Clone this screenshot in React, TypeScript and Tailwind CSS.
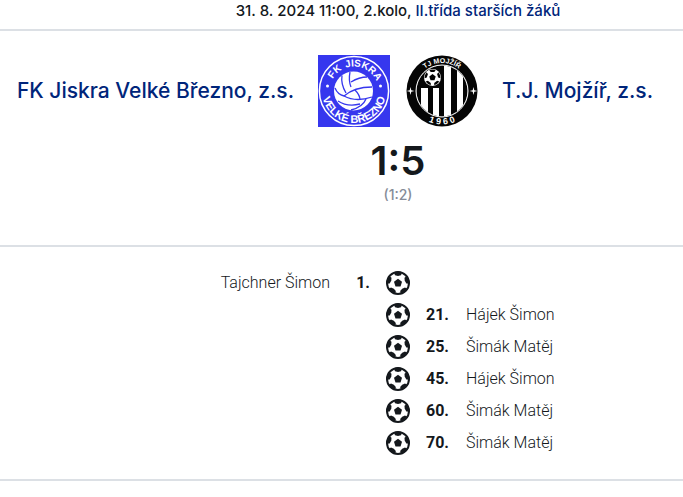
interface Goal {
  minute: number;
  player: string;
  side: "home" | "away";
}

const goals: Goal[] = [
  { minute: 1, player: "Tajchner Šimon", side: "home" },
  { minute: 21, player: "Hájek Šimon", side: "away" },
  { minute: 25, player: "Šimák Matěj", side: "away" },
  { minute: 45, player: "Hájek Šimon", side: "away" },
  { minute: 60, player: "Šimák Matěj", side: "away" },
  { minute: 70, player: "Šimák Matěj", side: "away" },
];

const patchAngles = [0, 72, 144, 216, 288];

function BallIcon() {
  return (
    <svg viewBox="0 0 24 24" className="size-6 text-[#14181c]" fill="currentColor" aria-hidden="true">
      <circle cx="12" cy="12" r="11" fill="#fff" stroke="currentColor" strokeWidth="2" />
      <path d="M12 7.8 16 10.7 14.5 15.4H9.5L8 10.7Z" />
      {patchAngles.map((angle) => (
        <path
          key={angle}
          d="M7.8 1.2Q12 0 16.2 1.2L15 4.2 12 4.900 9 4.2Z"
          transform={`rotate(${angle} 12 12)`}
        />
      ))}
    </svg>
  );
}

function JiskraLogo() {
  return (
    <svg viewBox="0 0 72 72" className="size-[72px] shrink-0" role="img" aria-label="FK Jiskra Velké Březno">
      <defs>
        <path id="jiskra-top" d="M11.5 36A24.5 24.5 0 0 1 60.5 36" />
        <path id="jiskra-bottom" d="M4 36A32 32 0 0 0 68 36" />
      </defs>
      <rect width="72" height="72" fill="#3637ee" />
      <circle cx="36" cy="36" r="34.6" fill="none" stroke="#fff" strokeWidth="1.5" />
      <circle cx="35.5" cy="36" r="19.5" fill="#fff" />
      <g fill="none" stroke="#3637ee" strokeWidth="1.3">
        <path d="M32 17C31 22 31 27 33 32" />
        <path d="M24 20.5C23 27 25 33 28 38" />
        <path d="M17 33C19 38 22 40 26 41" />
        <path d="M26 41C34 34 44 32 54 32" />
        <path d="M33 27C38 24 43 22 49 22" />
        <path d="M26 41C35 46 45 45 54 42" />
        <path d="M20 46C26 50 34 51 42 49" />
        <path d="M33 55C41 53 46 49 48 44" />
        <path d="M37 35C40 38 42 41 42 45" />
      </g>
      <circle cx="9.5" cy="31" r="1.5" fill="#fff" />
      <circle cx="62.5" cy="31" r="1.5" fill="#fff" />
      <g
        fill="#fff"
        textAnchor="middle"
        className="font-['Liberation_Sans_Narrow','Liberation_Sans',sans-serif] font-bold"
      >
        <text className="text-[10px]">
          <textPath href="#jiskra-top" startOffset="25%">FK</textPath>
        </text>
        <text className="text-[10px]">
          <textPath href="#jiskra-top" startOffset="63%">JISKRA</textPath>
        </text>
        <text className="text-[11px]">
          <textPath href="#jiskra-bottom" startOffset="50%">VELKÉ BŘEZNO</textPath>
        </text>
      </g>
    </svg>
  );
}

function MojzirLogo() {
  return (
    <svg viewBox="0 0 72 72" className="size-[72px] shrink-0" role="img" aria-label="T.J. Mojžíř">
      <defs>
        <path id="mojzir-top" d="M8 36A28 28 0 0 1 64 36" />
        <path id="mojzir-bottom" d="M2.5 36A33.5 33.5 0 0 0 69.5 36" />
        <clipPath id="mojzir-shield">
          <circle cx="36" cy="36" r="25.5" />
        </clipPath>
      </defs>
      <circle cx="36" cy="36" r="35.5" fill="#050505" />
      <g clipPath="url(#mojzir-shield)">
        <rect x="10" y="10" width="52" height="52" fill="#fff" />
        <rect x="8" y="8" width="30" height="25" fill="#050505" />
        <rect x="9" y="33" width="6" height="31" fill="#050505" />
        <rect x="22" y="33" width="5" height="31" fill="#050505" />
        <rect x="33" y="8" width="5" height="56" fill="#050505" />
        <rect x="45" y="8" width="6" height="56" fill="#050505" />
        <rect x="57" y="8" width="7" height="56" fill="#050505" />
      </g>
      <circle cx="36" cy="36" r="26" fill="none" stroke="#fff" strokeWidth="1" />
      <g transform="translate(26.5 22.5)" fill="#050505">
        <circle r="8.5" fill="#fff" />
        <path d="M0-3.4 3.2-1 2 2.7H-2L-3.200-1Z" />
        {patchAngles.map((angle) => (
          <path key={angle} d="M-3.2-7.4Q0-8.4 3.200-7.4L1.8-5.4H-1.8Z" transform={`rotate(${angle})`} />
        ))}
      </g>
      <path d="M4.500 32 5.300 35.2 8.500 36 5.300 36.8 4.500 40 3.700 36.8 .5 36 3.700 35.2Z" fill="#fff" />
      <path d="M67.500 32 68.300 35.2 71.500 36 68.300 36.8 67.500 40 66.700 36.8 63.500 36 66.700 35.2Z" fill="#fff" />
      <g fill="#fff" textAnchor="middle" className="font-['Liberation_Sans',sans-serif] font-bold">
        <text className="text-[7px]">
          <textPath href="#mojzir-top" startOffset="50%">TJ MOJŽÍŘ</textPath>
        </text>
        <text className="text-[9px]">
          <textPath href="#mojzir-bottom" startOffset="50%">1 9 6 0</textPath>
        </text>
      </g>
    </svg>
  );
}

function GoalRow({ goal }: { goal: Goal }) {
  const home = goal.side === "home";

  return (
    <li className="grid h-8 grid-cols-[1fr_auto_1fr] items-center gap-4">
      <div className="flex justify-end">
        {home && (
          <>
            <span>{goal.player}</span>
            <span className="w-10 text-right font-bold">{goal.minute}.</span>
          </>
        )}
      </div>
      <BallIcon />
      <div className="flex">
        {!home && (
          <>
            <span className="w-10 font-bold">{goal.minute}.</span>
            <span>{goal.player}</span>
          </>
        )}
      </div>
    </li>
  );
}

export default function App() {
  return (
    <div className="overflow-x-hidden bg-white text-[#14181c]">
      <main className="min-w-[796px] font-[Inter,sans-serif]">
        <p className="border-b-2 border-[#dce0e5] pb-2 text-center text-[15px] leading-[21px] font-medium">
          31. 8. 2024 11:00, 2.kolo,{" "}
          <a href="#soutez" className="text-[#00257a]">
            II.třída starších žáků
          </a>
        </p>

        <section className="border-b-2 border-[#dce0e5] pt-6 pb-10 text-center">
          <div className="grid grid-cols-[1fr_auto_1fr] items-center gap-6 text-[21px] leading-7 font-medium text-[#00257a]">
            <a href="#domaci" className="text-right whitespace-nowrap">
              FK Jiskra Velké Březno, z.s.
            </a>
            <div className="flex gap-4">
              <JiskraLogo />
              <MojzirLogo />
            </div>
            <a href="#hoste" className="text-left whitespace-nowrap">
              T.J. Mojžíř, z.s.
            </a>
          </div>
          <h1 className="mt-3 text-[40px] leading-[44px] font-semibold">1:5</h1>
          <p className="mt-0.5 text-[14px] leading-5 font-medium text-[#868c98]">(1:2)</p>
        </section>

        <ul className="border-b-2 border-[#dce0e5] py-5 font-[Roboto,sans-serif] text-base leading-6 font-light">
          {goals.map((goal) => (
            <GoalRow key={goal.minute} goal={goal} />
          ))}
        </ul>
      </main>
    </div>
  );
}
